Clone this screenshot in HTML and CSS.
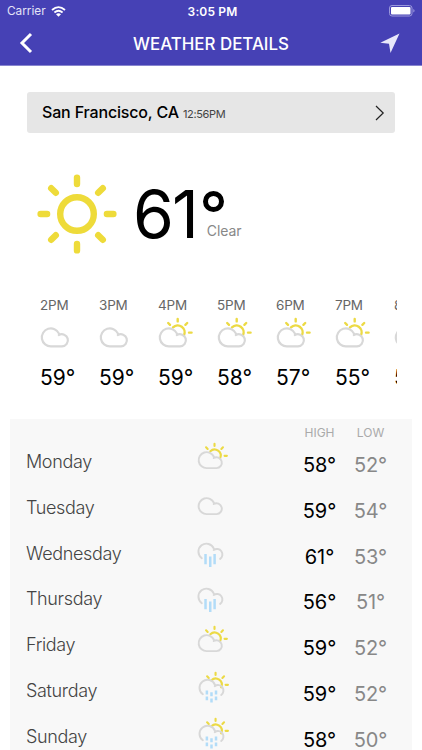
FILE: index.html
```html
<!DOCTYPE html>
<html lang="en">
<head>
    <meta charset="UTF-8">
    <meta name="viewport" content="width=device-width, initial-scale=1.0">
    <title>Weather Details</title>
    <link rel="stylesheet" href="styles.css">
</head>
<body>
    <!-- weather icons -->
    <svg class="sprite" width="0" height="0">
        <symbol id="cloud" viewBox="0 0 36 36">
            <path class="cloud-line" d="M11.2 29.4A9 9 0 1 1 19 16.6M18.8 18A6.1 6.1 0 1 1 22 29.4H11.2"/>
        </symbol>
        <symbol id="half-sun" viewBox="0 0 36 36">
            <path class="sun-line" d="M15 10.4A6.9 6.9 0 0 1 26 18.3M19.7 2V4.4M10.2 6L12 7.8M29.2 6L27.4 7.8M31 15.6H33.6"/>
        </symbol>
        <symbol id="partly" viewBox="0 0 36 36">
            <use href="#half-sun"/>
            <use href="#cloud"/>
        </symbol>
        <symbol id="open-cloud" viewBox="0 0 36 36">
            <path class="cloud-line" d="M5.4 27.2A9 9 0 1 1 19 16.6M18.8 18A6.1 6.1 0 1 1 26 28"/>
        </symbol>
        <symbol id="rain" viewBox="0 0 36 36">
            <use href="#open-cloud"/>
            <path class="rain-line" d="M9.6 22.6V34M14.9 25.4V37M19.8 22.6V34"/>
        </symbol>
        <symbol id="showers" viewBox="0 0 36 36">
            <use href="#half-sun" x="1.2"/>
            <use href="#open-cloud" x="1.2" y="-1"/>
            <path class="rain-line" d="M11.1 22V26.4M11.1 28.8V33M16.3 24V28.4M16.3 31V35.4M21.4 22V26.4M21.4 28.8V33"/>
        </symbol>
    </svg>

    <header>
        <div class="status-bar">
            <div class="carrier">
                <span>Carrier</span>
                <svg width="15" height="11" viewBox="0 0 15 11">
                    <path d="M1 4Q7.5 -1.8 14 4M3.4 6.5Q7.5 3 11.6 6.5" fill="none" stroke="#fff" stroke-width="1.8"/>
                    <path d="M5 8.2Q7.5 6.2 10 8.2L7.5 10.7Z" fill="#fff"/>
                </svg>
            </div>
            <span class="clock">3:05 PM</span>
            <svg class="battery" width="27" height="12" viewBox="0 0 27 12">
                <rect x=".5" y=".5" width="22.5" height="10.5" rx="2.5" fill="none" stroke="#9b98dc"/>
                <rect x="2" y="2" width="19.5" height="7.5" rx="1" fill="#fff"/>
                <path d="M24.3 4C26 4.6 26 7 24.3 7.6Z" fill="#9b98dc"/>
            </svg>
        </div>
        <nav>
            <svg width="14" height="22" viewBox="0 0 14 22">
                <path d="M12 2L3 11L12 20" fill="none" stroke="#fff" stroke-width="3"/>
            </svg>
            <h1>WEATHER DETAILS</h1>
            <svg width="20" height="21" viewBox="0 0 20 21">
                <path d="M19.5 .5L10.5 20L9 10.8L.3 9.8Z" fill="#e8e7fa"/>
            </svg>
        </nav>
    </header>

    <main>
        <div class="location">
            <span class="city">San Francisco, CA</span>
            <span class="local-time">12:56PM</span>
            <svg width="10" height="16" viewBox="0 0 10 16">
                <path d="M1 1L8.2 8L1 15" fill="none" stroke="#222" stroke-width="1.2"/>
            </svg>
        </div>

        <section class="current">
            <svg width="80" height="80" viewBox="0 0 80 80">
                <g fill="none" stroke="#eedb3a" stroke-width="6.4" stroke-linecap="round">
                    <circle cx="40" cy="40" r="16.8"/>
                    <path d="M40 3.6V10.1M40 69.9V76.4M3.6 40H10.1M69.9 40H76.4M14.2 14.2L18.8 18.8M61.2 61.2L65.8 65.8M14.2 65.8L18.8 61.2M61.2 18.8L65.8 14.2"/>
                </g>
            </svg>
            <span class="temp">61<span class="degree"></span></span>
            <span class="summary">Clear</span>
        </section>

        <section class="hourly">
            <div class="hour"><span>2PM</span><svg><use href="#cloud"/></svg><b>59°</b></div>
            <div class="hour"><span>3PM</span><svg><use href="#cloud"/></svg><b>59°</b></div>
            <div class="hour"><span>4PM</span><svg><use href="#partly"/></svg><b>59°</b></div>
            <div class="hour"><span>5PM</span><svg><use href="#partly"/></svg><b>58°</b></div>
            <div class="hour"><span>6PM</span><svg><use href="#partly"/></svg><b>57°</b></div>
            <div class="hour"><span>7PM</span><svg><use href="#partly"/></svg><b>55°</b></div>
            <div class="hour"><span>8PM</span><svg><use href="#cloud"/></svg><b>54°</b></div>
        </section>

        <section class="daily">
            <div class="labels"><span>HIGH</span><span>LOW</span></div>
            <div class="day"><span class="name">Monday</span><svg><use href="#partly"/></svg><span class="high">58°</span><span class="low">52°</span></div>
            <div class="day"><span class="name">Tuesday</span><svg><use href="#cloud"/></svg><span class="high">59°</span><span class="low">54°</span></div>
            <div class="day"><span class="name">Wednesday</span><svg><use href="#rain"/></svg><span class="high">61°</span><span class="low">53°</span></div>
            <div class="day"><span class="name">Thursday</span><svg><use href="#rain"/></svg><span class="high">56°</span><span class="low">51°</span></div>
            <div class="day"><span class="name">Friday</span><svg><use href="#partly"/></svg><span class="high">59°</span><span class="low">52°</span></div>
            <div class="day"><span class="name">Saturday</span><svg><use href="#showers"/></svg><span class="high">59°</span><span class="low">52°</span></div>
            <div class="day"><span class="name">Sunday</span><svg><use href="#showers"/></svg><span class="high">58°</span><span class="low">50°</span></div>
        </section>
    </main>
</body>
</html>
```

FILE: styles.css
```css
* {
    box-sizing: border-box;
}
body {
    margin: 0;
    height: 750px;
    overflow: hidden;
    font-family: Inter, "Liberation Sans", sans-serif;
    background-color: #fff;
    color: #000;
}
svg {
    display: block;
    overflow: visible;
    flex: none;
}
.sprite {
    position: absolute;
}
symbol {
    overflow: visible;
}
.cloud-line, .sun-line, .rain-line {
    fill: none;
    stroke-width: 2.2;
    stroke-linecap: round;
}
.cloud-line {
    stroke: #d8d8d8;
}
.sun-line {
    stroke: #ecda45;
    stroke-width: 2.4;
}
.rain-line {
    stroke: #b2dcf8;
    stroke-width: 2.8;
    stroke-linecap: butt;
}

header {
    height: 66px;
    background-color: #4641b5;
    border-bottom: 1px solid #8885cf;
    color: #fff;
}
.status-bar {
    display: grid;
    grid-template-columns: 1fr auto 1fr;
    align-items: center;
    height: 22px;
    padding: 0 6px 0 7px;
    font-size: 12px;
}
.carrier {
    display: flex;
    align-items: center;
    gap: 5px;
    font-size: 11.8px;
    color: #e4e3f7;
}
.clock {
    padding-left: 2px;
    font-weight: 600;
    letter-spacing: 0.15px;
}
.battery {
    justify-self: end;
}
nav {
    display: flex;
    align-items: center;
    justify-content: space-between;
    height: 42px;
    padding: 0 22px 0 19px;
}
h1 {
    margin: 1px 0 0 9px;
    font-size: 16.9px;
    font-weight: 500;
}

.location {
    display: flex;
    align-items: baseline;
    height: 41px;
    margin: 26px 27px 0 27px;
    padding: 0 10px 0 15px;
    line-height: 41px;
    background-color: #e6e6e6;
    border-radius: 3px;
}
.city {
    font-size: 16px;
    font-weight: 500;
    letter-spacing: -0.16px;
}
.local-time {
    margin-left: 4px;
    font-size: 11px;
    letter-spacing: -0.35px;
    color: #444;
}
.location svg {
    align-self: center;
    margin-left: auto;
}

.current {
    display: flex;
    height: 80px;
    margin: 41px 0 0 37px;
}
.temp {
    display: flex;
    margin-left: 16px;
    font-size: 66px;
    line-height: 80px;
    letter-spacing: -2px;
}
.degree {
    width: 21px;
    height: 21px;
    margin: 17px 0 0 6px;
    border: 5px solid #000;
    border-radius: 50%;
}
.summary {
    margin: 47px 0 0 -17px;
    font-size: 14px;
    line-height: 20px;
    letter-spacing: -0.1px;
    color: #888;
}

.hourly {
    display: flex;
    width: 357px;
    height: 100px;
    margin: 41px 0 0 40px;
    overflow: hidden;
}
.hour {
    flex: 0 0 59px;
    display: flex;
    flex-direction: column;
}
.hour span {
    font-size: 13.5px;
    line-height: 20px;
    letter-spacing: -0.2px;
    color: #666;
}
.hour svg {
    width: 36px;
    height: 36px;
    margin-top: 2px;
}
.hour b {
    margin: 12px 0 0;
    font-size: 21px;
    font-weight: 400;
    line-height: 26px;
}

.daily {
    height: 356px;
    margin: 24px 10px 0;
    padding: 0 16px;
    background-color: #f8f8f8;
}
.labels {
    display: flex;
    justify-content: flex-end;
    height: 20px;
    padding-top: 4px;
    font-size: 12px;
    line-height: 20px;
    color: #aaa;
}
.labels span {
    width: 51px;
    text-align: center;
}
.day {
    display: grid;
    grid-template-columns: 171px 1fr 51px 51px;
    height: 45.8px;
}
.name {
    padding-top: 11px;
    font-size: 18px;
    font-weight: 300;
    line-height: 24px;
    letter-spacing: -0.35px;
    color: #444;
}
.day svg {
    width: 32px;
    height: 32px;
    margin-top: 3px;
}
.high, .low {
    padding-top: 13px;
    font-size: 20px;
    line-height: 26px;
    letter-spacing: -0.1px;
    text-align: center;
}
.low {
    color: #888;
}
```
